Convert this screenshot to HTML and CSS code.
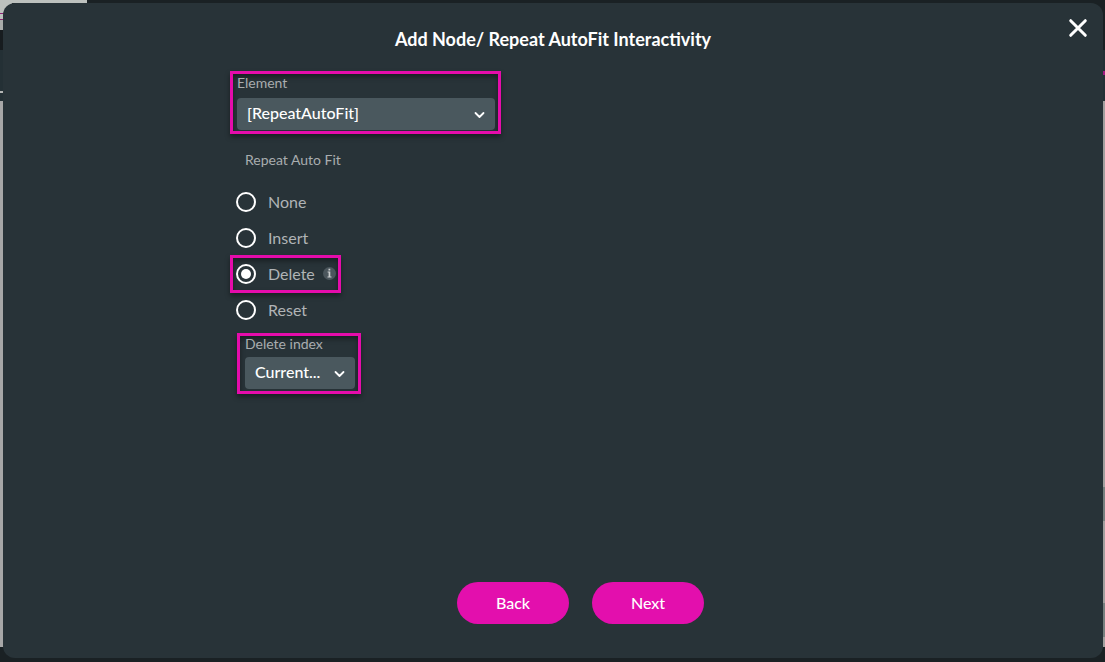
FILE: index.html
```html
<!DOCTYPE html>
<html lang="en">
<head>
<meta charset="utf-8">
<meta name="viewport" content="width=device-width, initial-scale=1">
<title>Add Node/ Repeat AutoFit Interactivity</title>
<link rel="stylesheet" href="styles.css">
</head>
<body>
<main class="modal" role="dialog" aria-labelledby="modal-title">
  <header class="modal-header">
    <h1 class="modal-title" id="modal-title">Add Node/ Repeat AutoFit Interactivity</h1>
    <button class="close" type="button" aria-label="Close">
      <svg width="20" height="20" viewBox="0 0 20 20" fill="none" stroke="#fff" stroke-width="3" stroke-linecap="round"><path d="M2.700 2.700l14.600 14.600M17.300 2.700L2.700 17.300"/></svg>
    </button>
  </header>

  <form class="modal-body">
    <div class="field highlight field-element">
      <label class="field-label" for="element">Element</label>
      <div class="select-wrap">
        <select class="select" id="element"><option>[RepeatAutoFit]</option></select>
        <svg class="chevron" width="12" height="8" viewBox="0 0 12 8" fill="none" stroke="#fff" stroke-width="1.800" stroke-linecap="round" stroke-linejoin="round"><path d="M2.500 2l4 4 4-4"/></svg>
      </div>
    </div>

    <fieldset class="group">
      <legend class="group-title">Repeat Auto Fit</legend>
      <label class="option"><input class="radio" type="radio" name="action">None</label>
      <label class="option"><input class="radio" type="radio" name="action">Insert</label>
      <label class="option highlight option-highlight"><input class="radio" type="radio" name="action" checked>Delete
        <svg class="info" width="13" height="13" viewBox="0 0 13 13"><circle cx="6.500" cy="6.500" r="6.500" fill="#4b565c"/><path d="M5.500 1.800h1.800v1.700H5.500zM4.600 4.500h2.700v5H8.500v1H4.500v-1h1.100V5.500h-1z" fill="#c9cccd"/></svg>
      </label>
      <label class="option"><input class="radio" type="radio" name="action">Reset</label>
    </fieldset>

    <div class="field highlight field-index">
      <label class="field-label" for="index">Delete index</label>
      <div class="select-wrap">
        <select class="select" id="index"><option>Current...</option></select>
        <svg class="chevron" width="12" height="8" viewBox="0 0 12 8" fill="none" stroke="#fff" stroke-width="1.800" stroke-linecap="round" stroke-linejoin="round"><path d="M2.500 2l4 4 4-4"/></svg>
      </div>
    </div>
  </form>

  <footer class="modal-footer">
    <button class="button" type="button">Back</button>
    <button class="button" type="button">Next</button>
  </footer>
</main>
</body>
</html>
```
FILE: styles.css
```css
* {
  box-sizing: border-box;
}

body {
  margin: 0;
  padding: 3px 2px 4px 3px;
  min-height: 100vh;
  display: flex;
  font-family: Lato, "Liberation Sans", sans-serif;
  color: #fff;
  /* dimmed editor behind the dialog: tab strip, left edge, right edge */
  background-color: #1a2124;
  background-image:
    linear-gradient(#bdc1be, #bdc1be),
    linear-gradient(#bdc1be 13px, #8c2273 13px 14px, #bdc1be 14px 19px, #8c2273 19px 20px, #a9acaa 20px 30px, #171c1f 30px 50px, #243035 50px 91px, #b4b6b5 91px 93px, #243035 93px 101px, #a7a7a7 101px 647px, #1a2124 647px),
    linear-gradient(#1a2124 50px, #243035 50px 71px, #a01a80 71px 75px, #243035 75px 101px, #a09f9e 101px 487px, #76807f 487px 521px, #a09f9e 521px 603px, #76807f 603px 637px, #a09f9e 637px 647px, #1a2124 647px);
  background-position: left top, left top, right top;
  background-size: 87px 3px, 12px 100%, 2px 100%;
  background-repeat: no-repeat;
}

.modal {
  flex: 1;
  display: flex;
  flex-direction: column;
  border-radius: 12px;
  background: #283338;
}

.modal-header {
  display: grid;
  grid-template-columns: 40px 1fr 40px;
  padding: 10px 5px 0;
}

.modal-title {
  grid-column: 2;
  margin: 14px 0 0;
  font-size: 18px;
  line-height: 24px;
  font-weight: 700;
  text-align: center;
}

.close {
  display: grid;
  place-items: center;
  width: 30px;
  height: 30px;
  margin-left: 5px;
  padding: 0;
  border: 0;
  background: none;
  cursor: pointer;
}

.modal-body {
  flex: 1;
  width: 100%;
  max-width: 646px;
  margin: 0 auto;
  padding-top: 20px;
}

.highlight {
  border: 3px solid #e50cab;
  box-shadow: 0 3px 5px rgba(0, 0, 0, 0.4), inset 0 3px 5px rgba(0, 0, 0, 0.4);
}

.field-element {
  width: 271px;
  padding: 0 3px 1px 4px;
}

.field-element .field-label {
  padding-bottom: 6px;
}

.field-index {
  width: 124px;
  margin: 5px 0 0 7px;
  padding: 0 3px 2px 5px;
}

.field-index .field-label {
  margin-top: -1px;
  padding-bottom: 4px;
}

.field-label {
  display: block;
  font-size: 14px;
  line-height: 18px;
  color: #a9adaf;
}

.select-wrap {
  display: grid;
  align-items: center;
}

.select {
  grid-area: 1 / 1;
  width: 100%;
  height: 32px;
  padding: 0 28px 2px 10px;
  border: 0;
  border-radius: 4px;
  appearance: none;
  background: #4a585e;
  color: #fff;
  font: 500 16px/20px Lato, "Liberation Sans", sans-serif;
}

.chevron {
  grid-area: 1 / 1;
  justify-self: end;
  margin: 2px 10px 0 0;
  pointer-events: none;
}

.group {
  margin: 17px 0 0;
  padding: 0;
  border: 0;
}

.group-title {
  padding: 0 0 15px 15px;
  font-size: 14px;
  line-height: 18px;
  color: #a9adaf;
}

.option {
  display: flex;
  align-items: center;
  width: fit-content;
  height: 36px;
  padding-left: 6px;
  font-size: 16px;
  line-height: 20px;
  color: #b0b4b6;
}

.option-highlight {
  width: 111px;
  height: 38px;
  margin: -1px 0;
  padding-left: 3px;
}

.radio {
  display: grid;
  place-items: center;
  flex: none;
  width: 20px;
  height: 20px;
  margin: 0 12px 0 0;
  border: 2px solid #fff;
  border-radius: 50%;
  appearance: none;
}

.radio:checked::before {
  content: "";
  width: 10px;
  height: 10px;
  border-radius: 50%;
  background: #fff;
}

.info {
  flex: none;
  margin: 0 0 2px 8px;
}

.modal-footer {
  display: flex;
  justify-content: center;
  gap: 23px;
  padding: 20px 0 34px 55px;
}

.button {
  width: 112px;
  height: 42px;
  border: 0;
  border-radius: 21px;
  background: #e30fad;
  color: #fff;
  font: 500 16px/20px Lato, "Liberation Sans", sans-serif;
  cursor: pointer;
}
```
